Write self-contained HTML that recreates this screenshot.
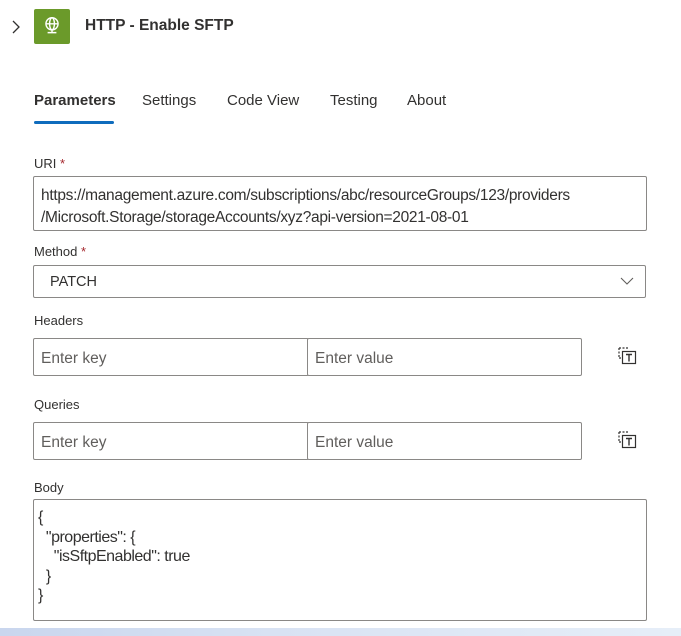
<!DOCTYPE html>
<html><head><meta charset="utf-8"><style>
*{box-sizing:border-box;margin:0;padding:0}
body{width:681px;height:636px;background:#fff;font-family:"Liberation Sans",sans-serif;color:#323130;position:relative;overflow:hidden}
.a{position:absolute}
.lbl{font-size:13px;color:#323130}
.req{color:#a4262c}
.box{border:1px solid #8a8886;border-radius:2px;background:#fff}
.ph{font-size:15.5px;color:#605e5c;position:absolute;top:11px;left:7px}
.tab{font-size:15px;top:92px;color:#323130}
</style></head><body>
<svg class="a" style="left:10px;top:19px" width="12" height="16" viewBox="0 0 12 16"><path d="M3 2 L9 8 L3 14" fill="none" stroke="#323130" stroke-width="1.3"/></svg>
<div class="a" style="left:34px;top:9px;width:36px;height:35px;background:#6b9a2a;border-radius:2px"></div>
<svg class="a" style="left:41px;top:15px" width="22" height="22" viewBox="0 0 20 20" fill="none" stroke="#fff" stroke-width="1.3"><circle cx="10" cy="8" r="5.5"/><ellipse cx="10" cy="8" rx="2.2" ry="5.5"/><path d="M4.5 8h11M10 13.5v2.5M6 16h8"/></svg>
<div class="a" style="left:85px;top:17px;font-size:15.5px;font-weight:bold;color:#323130">HTTP - Enable SFTP</div>
<div class="a tab" style="left:34px;font-weight:bold">Parameters</div>
<div class="a" style="left:34px;top:121px;width:80px;height:3px;background:#0f6cbd;border-radius:2px"></div>
<div class="a tab" style="left:142px">Settings</div>
<div class="a tab" style="left:227px">Code View</div>
<div class="a tab" style="left:330px">Testing</div>
<div class="a tab" style="left:407px">About</div>
<div class="a lbl" style="left:34px;top:156px">URI <span class="req">*</span></div>
<div class="a box" style="left:33px;top:176px;width:614px;height:55px"></div>
<div class="a" style="left:41px;top:185px;font-size:15.5px;line-height:22px;white-space:nowrap;letter-spacing:-0.3px">https://management.azure.com/subscriptions/abc/resourceGroups/123/providers<br>/Microsoft.Storage/storageAccounts/xyz?api-version=2021-08-01</div>
<div class="a lbl" style="left:34px;top:244px">Method <span class="req">*</span></div>
<div class="a box" style="left:33px;top:265px;width:613px;height:33px"><span class="a" style="left:16px;top:8px;font-size:14.5px">PATCH</span>
<svg class="a" style="left:586px;top:10px" width="14" height="10" viewBox="0 0 14 10"><path d="M1 2 L7 8 L13 2" fill="none" stroke="#605e5c" stroke-width="1.1"/></svg></div>
<div class="a lbl" style="left:34px;top:313px">Headers</div>
<div class="a box" style="left:33px;top:338px;width:276px;height:38px"><span class="ph">Enter key</span></div>
<div class="a box" style="left:307px;top:338px;width:275px;height:38px"><span class="ph">Enter value</span></div>
<div class="a lbl" style="left:34px;top:397px">Queries</div>
<div class="a box" style="left:33px;top:422px;width:276px;height:38px"><span class="ph">Enter key</span></div>
<div class="a box" style="left:307px;top:422px;width:275px;height:38px"><span class="ph">Enter value</span></div>
<svg class="a" style="left:618px;top:346px" width="20" height="20" viewBox="0 0 20 20"><path d="M1 2h9M1 2v10M1 12h2" fill="none" stroke="#323130" stroke-width="1.2" stroke-dasharray="2 1.5"/><rect x="4.5" y="5.5" width="13" height="12" fill="none" stroke="#323130" stroke-width="1.2"/><path d="M8 8.5h6M11 8.5v7" stroke="#323130" stroke-width="1.4"/></svg>
<svg class="a" style="left:618px;top:430px" width="20" height="20" viewBox="0 0 20 20"><path d="M1 2h9M1 2v10M1 12h2" fill="none" stroke="#323130" stroke-width="1.2" stroke-dasharray="2 1.5"/><rect x="4.5" y="5.5" width="13" height="12" fill="none" stroke="#323130" stroke-width="1.2"/><path d="M8 8.5h6M11 8.5v7" stroke="#323130" stroke-width="1.4"/></svg>
<div class="a lbl" style="left:34px;top:480px">Body</div>
<div class="a box" style="left:33px;top:499px;width:614px;height:122px"></div>
<pre class="a" style="left:38px;top:508px;font-family:'Liberation Sans',sans-serif;font-size:16px;line-height:19.5px;color:#323130;letter-spacing:-0.5px">{
  "properties": {
    "isSftpEnabled": true
  }
}</pre>
<div class="a" style="left:0;top:628px;width:681px;height:8px;background:linear-gradient(90deg,#c9d6ee 0%,#d8e2f3 40%,#e6eef8 100%)"></div>
</body></html>
